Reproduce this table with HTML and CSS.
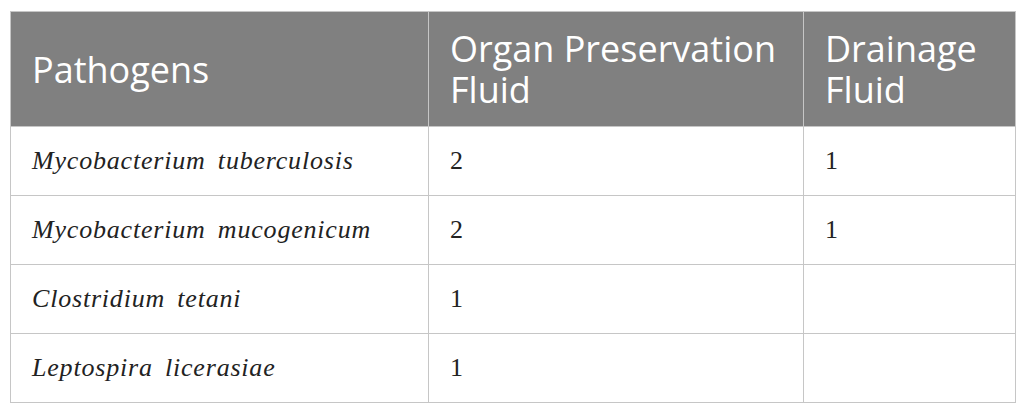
FILE: index.html
```html
<!DOCTYPE html>
<html>
<head>
<meta charset="utf-8">
<link rel="stylesheet" href="styles.css">
</head>
<body>
<table class="data">
  <thead>
    <tr>
      <th class="c1">Pathogens</th>
      <th class="c2">Organ Preservation Fluid</th>
      <th class="c3">Drainage Fluid</th>
    </tr>
  </thead>
  <tbody>
    <tr><td class="sp">Mycobacterium tuberculosis</td><td>2</td><td>1</td></tr>
    <tr><td class="sp">Mycobacterium mucogenicum</td><td>2</td><td>1</td></tr>
    <tr><td class="sp">Clostridium tetani</td><td>1</td><td></td></tr>
    <tr><td class="sp">Leptospira licerasiae</td><td>1</td><td></td></tr>
  </tbody>
</table>
</body>
</html>
```
FILE: styles.css
```css
html, body {
  margin: 0;
  padding: 0;
  background: #ffffff;
}
body {
  padding: 11px 10px 0 10px;
}
.data {
  border-collapse: collapse;
  width: 1006px;
  table-layout: fixed;
}
.data th, .data td {
  border: 1px solid #c6c6c6;
  text-align: left;
  vertical-align: middle;
  padding: 0 6px 0 21px;
}
.data th {
  background: #808080;
  color: #ffffff;
  font-family: "Open Sans", sans-serif;
  font-weight: 400;
  font-size: 36px;
  line-height: 41px;
  height: 114px;
}
.c1 { width: 390px; }
.c2 { width: 347px; }
.data td {
  height: 68px;
  font-family: "Liberation Serif", serif;
  font-size: 26px;
  color: #222222;
}
.data td.sp {
  font-style: italic;
  letter-spacing: 0.8px;
  word-spacing: 5px;
}
```
